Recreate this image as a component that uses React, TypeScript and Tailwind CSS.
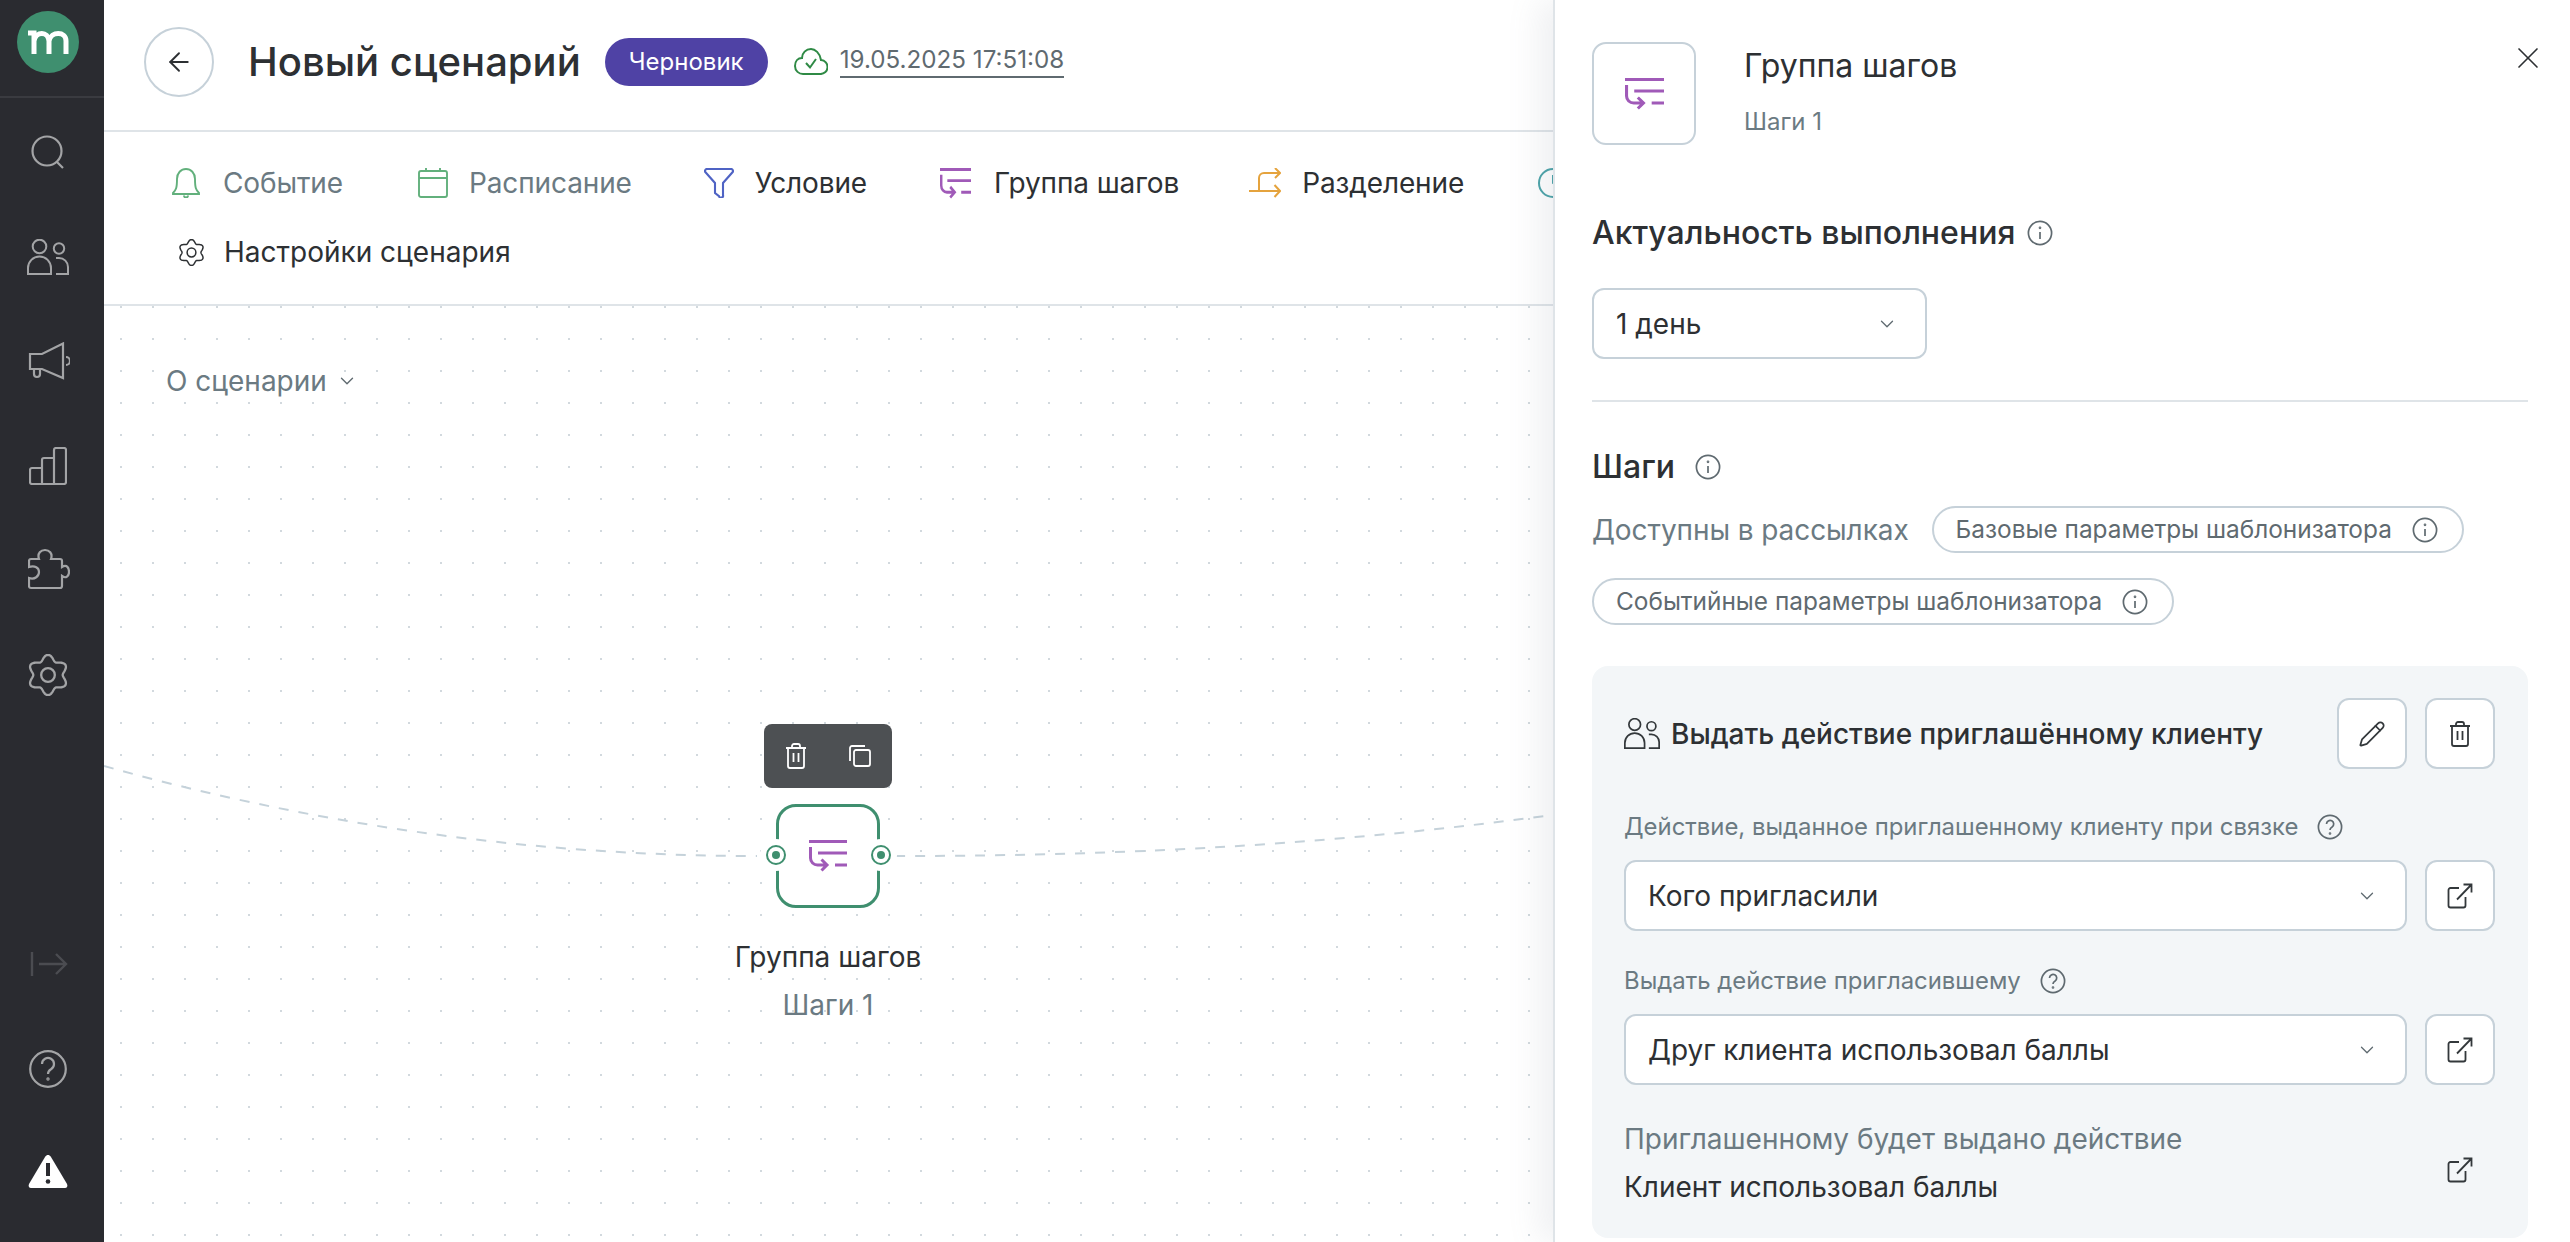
import { FC, ReactNode } from "react"
import { ArrowLeft, ChevronDown, Pencil, X } from "lucide-react"

type IconProps = { className?: string }

// gear with six round lobes, same shape in the sidebar and in the tabs
const gearPath = (() => {
  const pts: string[] = []
  for (let i = 0; i < 120; i++) {
    const a = (i / 120) * Math.PI * 2
    const r = 16.6 + 2.6 * Math.cos(6 * a)
    const x = 20 + r * Math.sin(a)
    const y = 20 - r * Math.cos(a)
    pts.push(`${x.toFixed(2)} ${y.toFixed(2)}`)
  }
  return `M${pts.join("L")}Z`
})()

const Gear: FC<IconProps> = ({ className }) => (
  <svg viewBox="0 0 40 40" fill="none" stroke="currentColor" strokeWidth="2.2" className={className}>
    <path d={gearPath} />
    <circle cx="20" cy="20" r="6.5" />
  </svg>
)

const GroupIcon: FC<IconProps> = ({ className }) => (
  <svg viewBox="0 0 38 32" preserveAspectRatio="none" fill="none" stroke="#a05ab8" strokeWidth="3" className={className}>
    <path d="M0 1.5H38M9 13H38M26 25H38" />
    <path d="M1.5 7V18a7 7 0 0 0 7 7H18M12.500 19.500L18 25L12.500 30.500" />
  </svg>
)

const Info: FC<IconProps> = ({ className }) => (
  <svg viewBox="0 0 26 26" fill="none" stroke="#5f6a70" strokeWidth="1.7" className={className}>
    <circle cx="13" cy="13" r="11.600" />
    <path d="M13 12V19" />
    <circle cx="13" cy="7.800" r="0.500" />
  </svg>
)

const Help: FC<IconProps> = ({ className }) => (
  <svg viewBox="0 0 26 26" fill="none" stroke="#5f6a70" strokeWidth="1.7" className={className}>
    <circle cx="13" cy="13" r="11.600" />
    <path d="M9.500 10a3.600 3.600 0 1 1 5.600 3c-1.300.8-2.100 1.500-2.100 3" />
    <circle cx="13" cy="19.500" r="0.500" />
  </svg>
)

const External: FC<IconProps> = ({ className }) => (
  <svg viewBox="0 0 26 26" fill="none" stroke="#33383b" strokeWidth="1.800" className={className}>
    <path d="M12 5H3.500a2 2 0 0 0-2 2v15.500a2 2 0 0 0 2 2h13a2 2 0 0 0 2-2V14" />
    <path d="M10 16.500L24.500 1.500M16.500 1.500h8v8" />
  </svg>
)

const Trash: FC<IconProps> = ({ className }) => (
  <svg viewBox="0 0 20 26" fill="none" stroke="currentColor" strokeWidth="1.800" className={className}>
    <path d="M0 5H20M6 5V3a2 2 0 0 1 2-2h4a2 2 0 0 1 2 2v2" />
    <path d="M2 5V23a2 2 0 0 0 2 2H16a2 2 0 0 0 2-2V5" />
    <path d="M7.500 10V19M12.500 10V19" />
  </svg>
)

const Users: FC<IconProps> = ({ className }) => (
  <svg viewBox="0 0 42 36" fill="none" stroke="currentColor" strokeWidth="2" className={className}>
    <circle cx="12.500" cy="7.500" r="6.800" />
    <circle cx="32" cy="9.500" r="5.200" />
    <path d="M1 35V29a11.500 11.500 0 0 1 23 0V35Z" />
    <path d="M29 19h3a9 9 0 0 1 9 9v7H29" />
  </svg>
)

const Select: FC<{ children: ReactNode; className?: string }> = ({ children, className }) => (
  <div
    className={`flex h-[71px] items-center justify-between rounded-[12px] border-2 border-[#c6d1d9] bg-white pl-[22px] pr-[27px] text-[28px] text-[#2d3033] ${className ?? ""}`}
  >
    <span>{children}</span>
    <ChevronDown size={22} strokeWidth={1.4} className="text-[#5f6a70]" />
  </div>
)

const SquareButton: FC<{ children: ReactNode }> = ({ children }) => (
  <div className="flex h-[71px] w-[70px] shrink-0 items-center justify-center rounded-[12px] border-2 border-[#c6d1d9] bg-white text-[#33383b]">
    {children}
  </div>
)

const Chip: FC<{ children: ReactNode }> = ({ children }) => (
  <div className="flex h-[47px] items-center gap-[20px] rounded-full border-2 border-[#c6d1d9] pl-[22px] pr-[24px] text-[24.4px] text-[#5f6a70]">
    <span>{children}</span>
    <Info className="h-[26px] w-[26px]" />
  </div>
)

const Sidebar = () => (
  <aside className="flex h-full w-[104px] shrink-0 flex-col items-center bg-[#2a2b30] text-[#a3a4a6]">
    <div className="flex h-[98px] w-full items-start justify-center border-b-2 border-[#3a3b40] pt-[11px]">
      <svg viewBox="0 0 62 62" className="ml-[-8px] h-[62px] w-[62px]">
        <circle cx="31" cy="31" r="31" fill="#3f8f6f" />
        <path
          d="M11 22H17V43M17 30C19 20 31 20 32 30V43M32 30C34 20 49 20 49 30V43"
          fill="none"
          stroke="#fff"
          strokeWidth="5"
        />
      </svg>
    </div>
    <svg viewBox="0 0 34 34" fill="none" stroke="currentColor" strokeWidth="2.200" className="mt-[37px] ml-[-9px] h-[34px] w-[34px]">
      <circle cx="16" cy="16" r="14.500" />
      <path d="M26 27L32 33" />
    </svg>
    <Users className="mt-[70px] ml-[-9px] h-[36px] w-[42px]" />
    <svg viewBox="0 0 42 38" fill="none" stroke="currentColor" strokeWidth="2.200" className="mt-[67px] ml-[-7px] h-[38px] w-[42px]">
      <path d="M2 12H14L35 1.500V36L14 27H2Z" />
      <path d="M6 27V32a3 3 0 0 0 6 0V27" />
      <path d="M38 15a4 4 0 0 1 0 8" />
    </svg>
    <svg viewBox="0 0 38 38" fill="none" stroke="currentColor" strokeWidth="2.200" className="mt-[67px] ml-[-8px] h-[38px] w-[38px]">
      <path d="M13 37V21H3a2 2 0 0 0-2 2V35a2 2 0 0 0 2 2H35a2 2 0 0 0 2-2V3a2 2 0 0 0-2-2H27a2 2 0 0 0-2 2V37M13 21V13a2 2 0 0 1 2-2H25" />
    </svg>
    <svg viewBox="0 0 42 42" fill="none" stroke="currentColor" strokeWidth="2.200" className="mt-[63px] ml-[-6px] h-[42px] w-[42px]">
      <path d="M3 11H11C9 5 13 2 17 2C21 2 25 5 23 11H32a2 2 0 0 1 2 2V19C39 16 41 20 41 24C41 28 38 31 34 28V38a2 2 0 0 1-2 2H3a2 2 0 0 1-2-2V30C7 32 11 28 11 24C11 20 7 17 1 19V13a2 2 0 0 1 2-2Z" />
    </svg>
    <Gear className="mt-[64px] ml-[-8px] h-[42px] w-[42px]" />
    <svg viewBox="0 0 38 26" fill="none" stroke="#4b4c51" strokeWidth="2.400" className="mt-[auto] ml-[-6px] h-[26px] w-[38px]">
      <path d="M2 1V25M9 13H36M26 3L36 13L26 23" />
    </svg>
    <svg viewBox="0 0 38 38" fill="none" stroke="currentColor" strokeWidth="2.200" className="mt-[73px] ml-[-8px] h-[38px] w-[38px]">
      <circle cx="19" cy="19" r="17.800" />
      <path d="M13 14a6 6 0 1 1 9 5.200c-2.100 1.200-3 2.300-3 4.800" />
      <circle cx="19" cy="29" r="0.600" />
    </svg>
    <svg viewBox="0 0 40 34" className="mt-[66px] mb-[54px] ml-[-8px] h-[34px] w-[40px]">
      <path d="M20 1C21 1 22 1.500 23 3L39 30C40 32 39 34 37 34H3C1 34 0 32 1 30L17 3C18 1.500 19 1 20 1Z" fill="#fff" />
      <path d="M20 9V22" stroke="#2a2b30" strokeWidth="4" />
      <circle cx="20" cy="27.500" r="2.300" fill="#2a2b30" />
    </svg>
  </aside>
)

const Header = () => (
  <header className="flex h-[132px] shrink-0 items-center border-b-2 border-[#dfe4e8] pb-[6px] pl-[40px]">
    <div className="flex h-[70px] w-[70px] items-center justify-center rounded-full border-2 border-[#c6d1d9]">
      <ArrowLeft size={30} strokeWidth={1.5} className="text-[#2d3033]" />
    </div>
    <h1 className="ml-[34px] text-[40px] leading-[48px] font-medium text-[#2d3033]">Новый сценарий</h1>
    <div className="ml-[24px] flex h-[48px] w-[163px] items-center justify-center rounded-full bg-[#4f42a5] text-[24px] text-white">
      Черновик
    </div>
    <svg viewBox="0 0 34 27" fill="none" stroke="#2f8a45" strokeWidth="2" className="mt-[-2px] ml-[26px] h-[27px] w-[34px]">
      <path d="M9 26H26a7 7 0 0 0 1-14C26 5 21 1 17 1C12 1 8 5 8 10C4 10 1 13 1 18C1 23 5 26 9 26Z" />
      <path d="M12 15L16 19.500L22 11" />
    </svg>
    <span className="mt-[-2px] ml-[12px] border-b-2 border-[#5f6a70] text-[24.2px] leading-[32px] text-[#5f6a70]">
      19.05.2025 17:51:08
    </span>
  </header>
)

const Tab: FC<{ icon: ReactNode; label: string; muted?: boolean; className?: string }> = ({ icon, label, muted, className }) => (
  <div
    className={`flex h-[40px] shrink-0 items-center text-[28px] tracking-[-0.12px] ${muted ? "text-[#6b7a82]" : "text-[#2d3033]"} ${className ?? ""}`}
  >
    {icon}
    <span>{label}</span>
  </div>
)

const Tabs = () => (
  <nav className="h-[174px] shrink-0 overflow-hidden border-b-2 border-[#dfe4e8] pt-[31px] pl-[68px]">
    <div className="flex">
      <Tab
        muted
        label="Событие"
        className="gap-[23px]"
        icon={
          <svg viewBox="0 0 28 30" fill="none" stroke="#62b07c" strokeWidth="1.900" className="h-[30px] w-[28px]">
            <path d="M1 25C4 22 5 20 5 11C5 5 9 1 14 1C19 1 23 5 23 11C23 20 24 22 27 25V26H1Z" />
            <path d="M12 27.500a2 2 0 0 0 4 0" />
          </svg>
        }
      />
      <Tab
        muted
        label="Расписание"
        className="ml-[75px] gap-[21px]"
        icon={
          <svg viewBox="0 0 30 30" fill="none" stroke="#62b07c" strokeWidth="1.900" className="h-[30px] w-[30px]">
            <rect x="1" y="3" width="28" height="26" rx="2" />
            <path d="M1 10H29M8 0V3M22 0V3" />
          </svg>
        }
      />
      <Tab
        label="Условие"
        className="ml-[72px] gap-[21px]"
        icon={
          <svg viewBox="0 0 30 30" fill="none" stroke="#4f63c4" strokeWidth="2.100" className="h-[30px] w-[30px]">
            <path d="M3 1H27a2 2 0 0 1 1.500 3.300L19 15V27a2 2 0 0 1-4 1.200L11 25V15L1.500 4.300A2 2 0 0 1 3 1Z" />
          </svg>
        }
      />
      <Tab label="Группа шагов" className="ml-[73px] gap-[23px]" icon={<GroupIcon className="h-[31px] w-[31px]" />} />
      <Tab
        label="Разделение"
        className="ml-[70px] gap-[21px]"
        icon={
          <svg viewBox="0 0 32 30" fill="none" stroke="#e5a33d" strokeWidth="2" className="h-[30px] w-[32px]">
            <path d="M0 23H31M25.500 17L31 23L25.500 29" />
            <path d="M10 23V10a5 5 0 0 1 5-5H31M26 0L31 5L26 10" />
          </svg>
        }
      />
      <Tab
        label="Ожидание"
        className="ml-[74px] gap-[23px]"
        icon={
          <svg viewBox="0 0 30 30" fill="none" stroke="#4aa3a8" strokeWidth="2" className="h-[30px] w-[30px]">
            <circle cx="15" cy="15" r="14" />
            <path d="M15 7V15L21 19" />
          </svg>
        }
      />
    </div>
    <div className="mt-[29px] flex pl-[6px]">
      <div className="flex h-[40px] items-center gap-[19px] text-[28px] text-[#2d3033]">
        <Gear className="h-[27px] w-[27px]" />
        <span>Настройки сценария</span>
      </div>
    </div>
  </nav>
)

const Port: FC<{ className: string }> = ({ className }) => (
  <span className={`absolute top-[32px] flex h-[32px] w-[32px] items-center justify-center rounded-full bg-white ${className}`}>
    <span className="flex h-[20px] w-[20px] items-center justify-center rounded-full border-2 border-[#3f8f6f]">
      <span className="h-[8px] w-[8px] rounded-full bg-[#3f8f6f]" />
    </span>
  </span>
)

const Node = () => (
  <div className="absolute top-[418px] left-[660px] flex w-[128px] flex-col items-center">
    <div className="flex h-[64px] w-[128px] items-center justify-between rounded-[8px] bg-[#4d5053] pr-[21px] pl-[22px] text-white">
      <Trash className="h-[26px] w-[20px]" />
      <svg viewBox="0 0 22 22" fill="none" stroke="#fff" strokeWidth="1.800" className="h-[22px] w-[22px]">
        <rect x="5" y="5" width="16" height="16" rx="2" />
        <path d="M1 16V3a2 2 0 0 1 2-2H16" />
      </svg>
    </div>
    <div className="relative mt-[16px] flex h-[104px] w-[104px] items-center justify-center rounded-[20px] border-[3.5px] border-[#3f8f6f] bg-white">
      <GroupIcon className="h-[32px] w-[38px]" />
      <Port className="left-[-19.5px]" />
      <Port className="right-[-19.5px]" />
    </div>
    <div className="mt-[29px] whitespace-nowrap text-[28px] leading-[40px] text-[#2d3033]">Группа шагов</div>
    <div className="mt-[8px] whitespace-nowrap text-[28px] leading-[40px] text-[#6b7a82]">Шаги 1</div>
  </div>
)

const Canvas = () => (
  <div className="relative flex-1 bg-[radial-gradient(#d2d9de_1px,transparent_1px)] bg-[size:32px_32px] bg-[position:1px_-15px] pt-[55px] pl-[62px]">
    <div className="flex h-[40px] items-center gap-[9px] text-[28px] text-[#6b7a82]">
      <span className="bg-white">О сценарии</span>
      <ChevronDown size={22} strokeWidth={1.5} className="text-[#5f6a70]" />
    </div>
    <svg className="absolute top-0 left-0 h-full w-full" fill="none" stroke="#c5d2da" strokeWidth="2" strokeDasharray="10 10">
      <path d="M0 460C196 515 416 550 653 550" />
      <path d="M791 550C1046 550 1246 536 1449 509" />
    </svg>
    <Node />
  </div>
)

const Panel = () => (
  <aside className="absolute top-0 right-0 h-full w-[1017px] border-l-2 border-[#dfe4e8] bg-white pt-[42px] pr-[42px] pl-[37px] shadow-[-14px_0_30px_rgba(120,135,150,0.12)]">
    <div className="flex h-[103px] items-start">
      <div className="flex h-[103px] w-[104px] items-center justify-center rounded-[14px] border-2 border-[#c6d1d9]">
        <GroupIcon className="h-[32px] w-[39px]" />
      </div>
      <div className="ml-[48px] pt-[4px]">
        <div className="text-[32px] leading-[40px] text-[#2d3033]">Группа шагов</div>
        <div className="mt-[20px] text-[24px] leading-[32px] text-[#6b7a82]">Шаги 1</div>
      </div>
      <X size={36} strokeWidth={1.1} className="mt-[-2px] mr-[-18px] ml-auto text-[#2d3033]" />
    </div>

    <div className="mt-[68px] flex h-[40px] items-center gap-[12px] text-[32px] font-medium text-[#2d3033]">
      Актуальность выполнения
      <Info className="h-[26px] w-[26px]" />
    </div>
    <Select className="mt-[35px] w-[335px]">1 день</Select>
    <div className="mt-[41px] h-[2px] bg-[#dfe4e8]" />

    <div className="mt-[45px] flex h-[40px] items-center gap-[20px] text-[32px] font-medium text-[#2d3033]">
      Шаги
      <Info className="h-[26px] w-[26px]" />
    </div>
    <div className="mt-[19px] flex flex-wrap items-center gap-x-[23px] gap-y-[25px]">
      <span className="text-[28px] tracking-[-0.08px] text-[#6b7a82]">Доступны в рассылках</span>
      <Chip>Базовые параметры шаблонизатора</Chip>
      <Chip>Событийные параметры шаблонизатора</Chip>
    </div>

    <section className="mt-[41px] rounded-[16px] bg-[#f3f6f8] pt-[32px] pr-[33px] pb-[31px] pl-[32px]">
      <div className="flex h-[71px] items-center">
        <Users className="h-[31px] w-[36px] text-[#33383b]" />
        <span className="ml-[11px] flex-1 text-[28px] font-medium text-[#2d3033]">Выдать действие приглашённому клиенту</span>
        <div className="flex gap-[18px]">
          <SquareButton>
            <Pencil size={28} strokeWidth={1.5} />
          </SquareButton>
          <SquareButton>
            <Trash className="h-[26px] w-[20px]" />
          </SquareButton>
        </div>
      </div>

      <div className="mt-[42px] flex h-[32px] items-center gap-[19px] text-[23.9px] text-[#6b7a82]">
        Действие, выданное приглашенному клиенту при связке
        <Help className="h-[26px] w-[26px]" />
      </div>
      <div className="mt-[17px] flex gap-[18px]">
        <Select className="flex-1">Кого пригласили</Select>
        <SquareButton>
          <External className="h-[26px] w-[26px]" />
        </SquareButton>
      </div>

      <div className="mt-[34px] flex h-[32px] items-center gap-[19px] text-[23.9px] text-[#6b7a82]">
        Выдать действие пригласившему
        <Help className="h-[26px] w-[26px]" />
      </div>
      <div className="mt-[17px] flex gap-[18px]">
        <Select className="flex-1">Друг клиента использовал баллы</Select>
        <SquareButton>
          <External className="h-[26px] w-[26px]" />
        </SquareButton>
      </div>

      <div className="mt-[34px] flex items-center justify-between pr-[22px]">
        <div>
          <div className="text-[28px] leading-[40px] text-[#6b7a82]">Приглашенному будет выдано действие</div>
          <div className="mt-[8px] text-[28px] leading-[40px] text-[#2d3033]">Клиент использовал баллы</div>
        </div>
        <External className="mt-[14px] h-[26px] w-[26px]" />
      </div>
    </section>
  </aside>
)

export default function App() {
  return (
    <div className="relative flex h-screen w-screen overflow-hidden bg-white [font-family:Inter,sans-serif] antialiased">
      <Sidebar />
      <main className="flex min-w-0 flex-1 flex-col">
        <Header />
        <Tabs />
        <Canvas />
      </main>
      <Panel />
    </div>
  )
}
